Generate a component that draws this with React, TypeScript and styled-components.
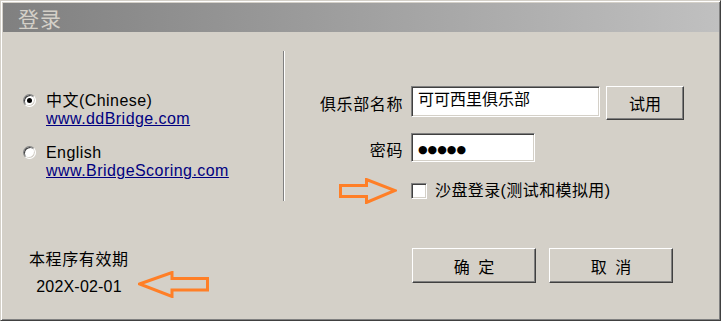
import React from 'react'
import styled, { createGlobalStyle } from 'styled-components';

const GlobalStyle = createGlobalStyle`
    html, body {
        margin: 0;
        padding: 0;
        background: #d4d0c8;
    }
    * {
        box-sizing: border-box;
    }
`;

const FONT = `"Liberation Sans", "Noto Sans CJK SC", sans-serif`;

const Window = styled.div`
    width: 721px;
    height: 321px;
    display: flex;
    flex-direction: column;
    padding: 2px 1px 1px 2px;
    background: #d4d0c8;
    border: 1px solid;
    border-color: #d4d0c8 #404040 #404040 #d4d0c8;
    box-shadow: inset 1px 1px #ffffff, inset -1px -1px #808080;
    font-family: ${FONT};
    font-size: 16px;
    color: #000;
`;

const TitleBar = styled.div`
    height: 29px;
    flex: none;
    display: flex;
    align-items: center;
    padding-left: 15px;
    background: linear-gradient(to right, #808080, #c0c0c0);
    color: #d4d0c8;
    font-size: 21px;
    letter-spacing: 1px;
`;

const Body = styled.div`
    flex: 1;
    display: flex;
    flex-direction: column;
`;

const TopArea = styled.div`
    height: 210px;
    display: flex;
`;

const LeftPane = styled.div`
    width: 280px;
    padding: 60px 0 0 20px;
    display: flex;
    flex-direction: column;
    gap: 16px;
`;

const LangOption = styled.div`
    display: flex;
    align-items: flex-start;
    gap: 10px;
`;

const Radio = styled.span<{ $checked?: boolean }>`
    width: 13px;
    height: 13px;
    margin-top: 2px;
    border-radius: 50%;
    background: #ffffff;
    border: 1px solid;
    border-color: #808080 #ffffff #ffffff #808080;
    box-shadow: inset 1px 1px #404040, inset -1px -1px #d4d0c8;
    display: flex;
    align-items: center;
    justify-content: center;
    flex: none;

    &::after {
        content: '';
        width: 5px;
        height: 5px;
        border-radius: 50%;
        background: ${p => (p.$checked ? '#000' : 'transparent')};
    }
`;

const LangText = styled.div`
    display: flex;
    flex-direction: column;
    line-height: 18px;
    letter-spacing: 0.45px;
`;

const SiteLink = styled.a`
    color: #000080;
    text-decoration: underline;
`;

const Separator = styled.div`
    width: 2px;
    height: 150px;
    margin-top: 19px;
    border-left: 1px solid #808080;
    border-right: 1px solid #ffffff;
`;

const RightPane = styled.div`
    flex: 1;
    padding-top: 54px;
    display: flex;
    flex-direction: column;
`;

const FormRow = styled.div<{ $gap?: number }>`
    display: flex;
    align-items: flex-start;
    gap: 8px;
    margin-bottom: ${p => p.$gap ?? 0}px;
`;

const FieldLabel = styled.div<{ $offset: number }>`
    width: 118px;
    flex: none;
    text-align: right;
    line-height: 18px;
    letter-spacing: 0.6px;
    padding-top: ${p => p.$offset}px;
`;

const ArrowSlot = styled.div`
    width: 118px;
    flex: none;
    display: flex;
    justify-content: flex-end;
    padding-right: 6px;
`;

const Controls = styled.div`
    display: flex;
    align-items: flex-start;
    gap: 6px;
`;

const TextBox = styled.div<{ $width: number; $height: number }>`
    width: ${p => p.$width}px;
    height: ${p => p.$height}px;
    background: #ffffff;
    border: 1px solid;
    border-color: #808080 #ffffff #ffffff #808080;
    box-shadow: inset 1px 1px #404040, inset -1px -1px #d4d0c8;
    padding: 3px 6px 0;
    line-height: 20px;
    white-space: nowrap;
    overflow: hidden;
`;

const MaskDots = styled.span`
    font-family: "DejaVu Sans", sans-serif;
    font-size: 11px;
    letter-spacing: 0;
    position: relative;
    top: 1px;
`;

const ClassicButton = styled.button<{ $width: number; $height: number }>`
    width: ${p => p.$width}px;
    height: ${p => p.$height}px;
    padding: 0;
    background: #d4d0c8;
    border: 1px solid;
    border-color: #ffffff #404040 #404040 #ffffff;
    box-shadow: inset -1px -1px #808080;
    font-family: ${FONT};
    font-size: 16px;
    color: #000;
    word-spacing: 4px;
`;

const CheckRow = styled.div`
    display: flex;
    align-items: center;
    gap: 8px;
    margin-top: 4px;
    line-height: 18px;
    letter-spacing: 0.4px;
`;

const CheckBox = styled.span`
    width: 16px;
    height: 16px;
    background: #ffffff;
    border: 1px solid;
    border-color: #808080 #ffffff #ffffff #808080;
    box-shadow: inset 1px 1px #404040, inset -1px -1px #d4d0c8;
    flex: none;
`;

const BottomArea = styled.div`
    display: flex;
    align-items: flex-start;
    padding: 0 46px 0 26px;
`;

const Validity = styled.div`
    display: grid;
    grid-template-columns: 100px auto;
    align-items: center;
    margin-top: 9px;
    line-height: 18px;
`;

const ValidityLabel = styled.div`
    grid-column: 1;
    letter-spacing: 0.6px;
    white-space: nowrap;
`;

const ValidityDate = styled.div`
    grid-column: 1;
    text-align: center;
    margin-top: 6px;
    letter-spacing: 0.2px;
`;

const LeftArrowWrap = styled.div`
    grid-column: 2;
    margin: 2px 0 0 9px;
    display: flex;
`;

const DialogButtons = styled.div`
    margin-left: auto;
    margin-top: 6px;
    display: flex;
    gap: 13px;
`;

const ARROW = '#ff7f27';

const RightArrow = () => (
    <svg width="58" height="26" viewBox="0 0 58 26">
        <polygon
            points="1.5,7.5 27.5,7.5 27.5,1.5 56,12.5 27.5,24.5 27.5,18.5 1.5,18.5"
            fill="none"
            stroke={ARROW}
            strokeWidth="3"
            strokeLinejoin="miter"
        />
    </svg>
);

const LeftArrow = () => (
    <svg width="71" height="27" viewBox="0 0 71 27">
        <polygon
            points="1.5,13 34,1.5 34,7.5 69.5,7.5 69.5,19 34,19 34,25.5"
            fill="none"
            stroke={ARROW}
            strokeWidth="3"
            strokeLinejoin="miter"
        />
    </svg>
);

export default function App() {
    return (
        <>
            <GlobalStyle />
            <Window>
                <TitleBar>登录</TitleBar>
                <Body>
                    <TopArea>
                        <LeftPane>
                            <LangOption>
                                <Radio $checked />
                                <LangText>
                                    <span>中文(Chinese)</span>
                                    <SiteLink>www.ddBridge.com</SiteLink>
                                </LangText>
                            </LangOption>
                            <LangOption>
                                <Radio />
                                <LangText>
                                    <span>English</span>
                                    <SiteLink>www.BridgeScoring.com</SiteLink>
                                </LangText>
                            </LangOption>
                        </LeftPane>
                        <Separator />
                        <RightPane>
                            <FormRow $gap={13}>
                                <FieldLabel $offset={10}>俱乐部名称</FieldLabel>
                                <Controls>
                                    <TextBox $width={189} $height={31}>可可西里俱乐部</TextBox>
                                    <ClassicButton $width={78} $height={34}>试用</ClassicButton>
                                </Controls>
                            </FormRow>
                            <FormRow $gap={16}>
                                <FieldLabel $offset={9}>密码</FieldLabel>
                                <TextBox $width={124} $height={29}>
                                    <MaskDots>●●●●●</MaskDots>
                                </TextBox>
                            </FormRow>
                            <FormRow>
                                <ArrowSlot>
                                    <RightArrow />
                                </ArrowSlot>
                                <CheckRow>
                                    <CheckBox />
                                    <span>沙盘登录(测试和模拟用)</span>
                                </CheckRow>
                            </FormRow>
                        </RightPane>
                    </TopArea>
                    <BottomArea>
                        <Validity>
                            <ValidityLabel>本程序有效期</ValidityLabel>
                            <ValidityDate>202X-02-01</ValidityDate>
                            <LeftArrowWrap>
                                <LeftArrow />
                            </LeftArrowWrap>
                        </Validity>
                        <DialogButtons>
                            <ClassicButton $width={124} $height={35}>确 定</ClassicButton>
                            <ClassicButton $width={124} $height={35}>取 消</ClassicButton>
                        </DialogButtons>
                    </BottomArea>
                </Body>
            </Window>
        </>
    );
}
